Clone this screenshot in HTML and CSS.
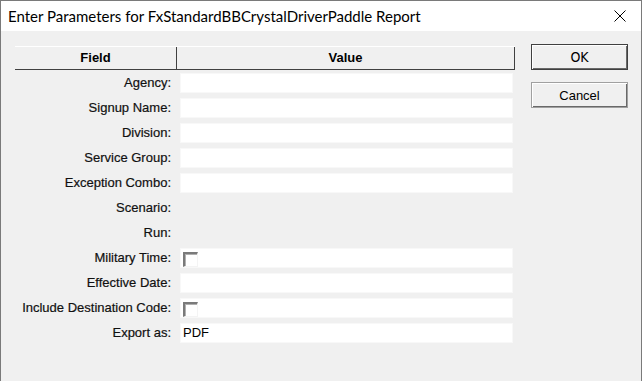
FILE: index.html
```html
<!DOCTYPE html>
<html lang="en">
<head>
    <meta charset="UTF-8">
    <title>Enter Parameters</title>
    <link rel="stylesheet" href="styles.css">
</head>
<body>
    <div class="window">
        <div class="titlebar">
            <span class="title">Enter Parameters for FxStandardBBCrystalDriverPaddle Report</span>
            <svg class="close" width="12" height="12" viewBox="0 0 12 12">
                <path d="M0.5 0.5 L11.5 11.5 M11.5 0.5 L0.5 11.5" stroke="#000" stroke-width="1" fill="none"/>
            </svg>
        </div>
        <div class="client">
            <div class="params">
                <div class="header">
                    <div class="head-cell">Field</div>
                    <div class="head-cell">Value</div>
                </div>
                <div class="rows">
                    <div class="row"><span class="label">Agency:</span><span class="value"></span></div>
                    <div class="row"><span class="label">Signup Name:</span><span class="value"></span></div>
                    <div class="row"><span class="label">Division:</span><span class="value"></span></div>
                    <div class="row"><span class="label">Service Group:</span><span class="value"></span></div>
                    <div class="row"><span class="label">Exception Combo:</span><span class="value"></span></div>
                    <div class="row"><span class="label">Scenario:</span><span class="empty"></span></div>
                    <div class="row"><span class="label">Run:</span><span class="empty"></span></div>
                    <div class="row"><span class="label">Military Time:</span><span class="value"><span class="check"></span></span></div>
                    <div class="row"><span class="label">Effective Date:</span><span class="value"></span></div>
                    <div class="row"><span class="label">Include Destination Code:</span><span class="value"><span class="check"></span></span></div>
                    <div class="row"><span class="label">Export as:</span><span class="value">PDF</span></div>
                </div>
            </div>
            <div class="buttons">
                <button class="btn default"><span class="ok">OK</span></button>
                <button class="btn">Cancel</button>
            </div>
        </div>
    </div>
</body>
</html>
```

FILE: styles.css
```css
body {
    margin: 0;
    font-family: "Liberation Sans", Arial, sans-serif;
    font-size: 13px;
    color: #000;
}
.window {
    width: 642px;
    height: 381px;
    box-sizing: border-box;
    border: 1px solid #7a7a7a;
    border-bottom: none;
    background: #f0f0f0;
    overflow: hidden;
}
.titlebar {
    height: 30px;
    background: #fff;
    display: flex;
    align-items: center;
    padding: 0 14px 0 7px;
}
.title {
    flex: 1;
    font-family: Lato, "Noto Sans", sans-serif;
    font-size: 15px;
    padding-bottom: 1px;
}
.close {
    margin-right: 1px;
}
.client {
    display: flex;
    padding: 15px 0 0 14px;
}
.params {
    width: 500px;
}
.header {
    display: grid;
    grid-template-columns: 162px 338px;
    height: 24px;
    box-sizing: border-box;
    border-top: 1px solid #fff;
    border-bottom: 1px solid #404040;
}
.head-cell {
    font-weight: bold;
    text-align: center;
    line-height: 22px;
    border-right: 1px solid #404040;
}
.rows {
    display: flex;
    flex-direction: column;
    gap: 5px;
    padding-top: 3px;
}
.row {
    display: grid;
    grid-template-columns: 165px 333px;
    height: 20px;
    line-height: 20px;
}
.label {
    text-align: right;
    padding-right: 9px;
    color: #111;
    -webkit-text-stroke: 0.2px #111;
}
.value {
    background: #fff;
    box-shadow: inset 0 0 0 1px #f8f8f8;
    display: flex;
    align-items: center;
    padding-left: 3px;
}
.check {
    width: 15px;
    height: 15px;
    box-sizing: border-box;
    border-top: 2px solid #7a7a7a;
    border-left: 2px solid #7a7a7a;
    border-right: 1px solid #f4f4f4;
    border-bottom: 1px solid #f4f4f4;
    box-shadow: inset 1px 1px 0 #b0b0b0;
    margin-top: 2px;
}
.buttons {
    display: flex;
    flex-direction: column;
    gap: 12px;
    margin-left: 16px;
}
.btn {
    width: 97px;
    height: 26px;
    background: #f0f0f0;
    border: 1px solid #a0a0a0;
    box-shadow: inset 1px 1px 0 #fff, inset -1px -1px 0 #696969;
    font-family: "Liberation Sans", Arial, sans-serif;
    font-size: 13px;
    color: #000;
    padding: 0;
}
.btn.default {
    border: 1px solid #404040;
    margin-top: -2px;
}
.ok {
    font-family: "DejaVu Sans Condensed", "DejaVu Sans", sans-serif;
    font-size: 14px;
}
```
